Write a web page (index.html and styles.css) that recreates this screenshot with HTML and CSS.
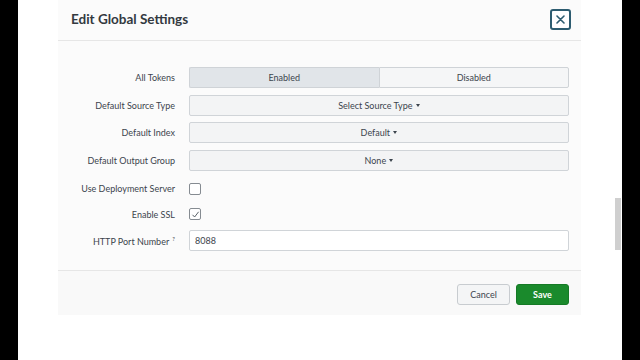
FILE: index.html
```html
<!DOCTYPE html>
<html lang="en">
<head>
  <meta charset="UTF-8">
  <title>Edit Global Settings</title>
  <link rel="stylesheet" href="styles.css">
</head>
<body>

  <div class="screen">
    <div class="modal">
      <div class="modal-header">
        <h2>Edit Global Settings</h2>
        <button class="close-btn" aria-label="Close">
          <svg width="9" height="9" viewBox="0 0 9 9"><path d="M1 1L8 8M8 1L1 8" stroke="#2d5c70" stroke-width="1.6" stroke-linecap="round"/></svg>
        </button>
      </div>

      <div class="modal-body">
        <div class="form-row">
          <label>All Tokens</label>
          <div class="toggle">
            <button class="toggle-btn active">Enabled</button>
            <button class="toggle-btn">Disabled</button>
          </div>
        </div>
        <div class="form-row">
          <label>Default Source Type</label>
          <button class="dropdown">Select Source Type <span class="caret"></span></button>
        </div>
        <div class="form-row">
          <label>Default Index</label>
          <button class="dropdown">Default <span class="caret"></span></button>
        </div>
        <div class="form-row">
          <label>Default Output Group</label>
          <button class="dropdown">None <span class="caret"></span></button>
        </div>
        <div class="form-row check-row first-check">
          <label>Use Deployment Server</label>
          <span class="checkbox"></span>
        </div>
        <div class="form-row check-row">
          <label>Enable SSL</label>
          <span class="checkbox">
            <svg width="9" height="9" viewBox="0 0 9 9"><path d="M1.5 4.8L3.6 7L7.6 1.8" fill="none" stroke="#4a5259" stroke-width="0.9"/></svg>
          </span>
        </div>
        <div class="form-row">
          <label>HTTP Port Number <sup class="help">?</sup></label>
          <input type="text" class="text-input" value="8088">
        </div>
      </div>

      <div class="modal-footer">
        <button class="btn btn-cancel">Cancel</button>
        <button class="btn btn-save">Save</button>
      </div>
    </div>

    <div class="scrollbar"></div>
  </div>

</body>
</html>
```

FILE: styles.css
```css
body {
  margin: 0;
  background-color: #000;
  font-family: Lato, "Open Sans", sans-serif;
  color: #3c444d;
}

.screen {
  position: relative;
  margin-left: 18px;
  width: 604px;
  height: 360px;
  background-color: #fff;
  overflow: hidden;
}

.modal {
  margin-left: 40px;
  width: 523px;
  background-color: #fbfbfb;
}

.modal-header {
  height: 40px;
  display: flex;
  justify-content: space-between;
  align-items: center;
  padding: 0 10px 0 13px;
  border-bottom: 1px solid #e6e6e6;
}

.modal-header h2 {
  margin: 0 0 2px 0;
  font-size: 13.5px;
  font-weight: bold;
  color: #33393f;
}

.close-btn {
  width: 21px;
  height: 21px;
  padding: 0;
  display: flex;
  align-items: center;
  justify-content: center;
  background-color: #fff;
  border: 2px solid #2d5c70;
  border-radius: 3px;
  margin-bottom: 1px;
}

.modal-body {
  padding: 26px 12px 19px 0;
  display: grid;
  row-gap: 6.5px;
}

.form-row {
  display: flex;
  align-items: center;
  height: 21px;
}

.check-row {
  height: 19px;
}

.first-check {
  margin-top: 2px;
}

.form-row label {
  width: 117px;
  margin-right: 14px;
  text-align: right;
  font-size: 9px;
  color: #3c444d;
}

.help {
  font-size: 6px;
  vertical-align: 4px;
  margin-left: 1px;
}

.toggle {
  flex: 1;
  display: flex;
  height: 21px;
}

.toggle-btn {
  flex: 1;
  font-family: inherit;
  font-size: 9px;
  color: #3c444d;
  background-color: #f5f6f7;
  border: 1px solid #cfd3d7;
  padding: 0;
}

.toggle-btn:first-child {
  border-radius: 2px 0 0 2px;
  border-right: none;
}

.toggle-btn:last-child {
  border-radius: 0 2px 2px 0;
}

.toggle-btn.active {
  background-color: #e1e5e9;
}

.dropdown {
  flex: 1;
  height: 21px;
  font-family: inherit;
  font-size: 9px;
  color: #3c444d;
  background-color: #f3f4f5;
  border: 1px solid #d0d4d8;
  border-radius: 2px;
  padding: 0;
}

.caret {
  display: inline-block;
  width: 0;
  height: 0;
  border-left: 2.5px solid transparent;
  border-right: 2.5px solid transparent;
  border-top: 3px solid #3c444d;
  vertical-align: 2px;
  margin-left: 1px;
}

.checkbox {
  width: 10px;
  height: 10px;
  border: 1px solid #858b91;
  border-radius: 2px;
  background-color: #fff;
  display: flex;
  align-items: center;
  justify-content: center;
}

.text-input {
  flex: 1;
  height: 21px;
  box-sizing: border-box;
  font-family: inherit;
  font-size: 9px;
  color: #3c444d;
  background-color: #fff;
  border: 1px solid #d0d4d8;
  border-radius: 2px;
  padding: 0 5px;
}

.modal-footer {
  height: 45px;
  box-sizing: border-box;
  border-top: 1px solid #e6e6e6;
  background-color: #f9f9f9;
  display: flex;
  justify-content: flex-end;
  gap: 6px;
  padding: 13px 12px 0 0;
}

.btn {
  width: 53px;
  height: 21px;
  font-family: inherit;
  font-size: 9px;
  border-radius: 3px;
  padding: 0;
}

.btn-cancel {
  background-color: #f4f5f6;
  border: 1px solid #c8ccd0;
  color: #3c444d;
}

.btn-save {
  background-color: #1a8a2c;
  border: 1px solid #167a26;
  color: #fff;
  font-weight: bold;
}

.scrollbar {
  position: absolute;
  left: 597px;
  top: 198px;
  width: 6px;
  height: 52px;
  background-color: #cfcfcf;
}
```
